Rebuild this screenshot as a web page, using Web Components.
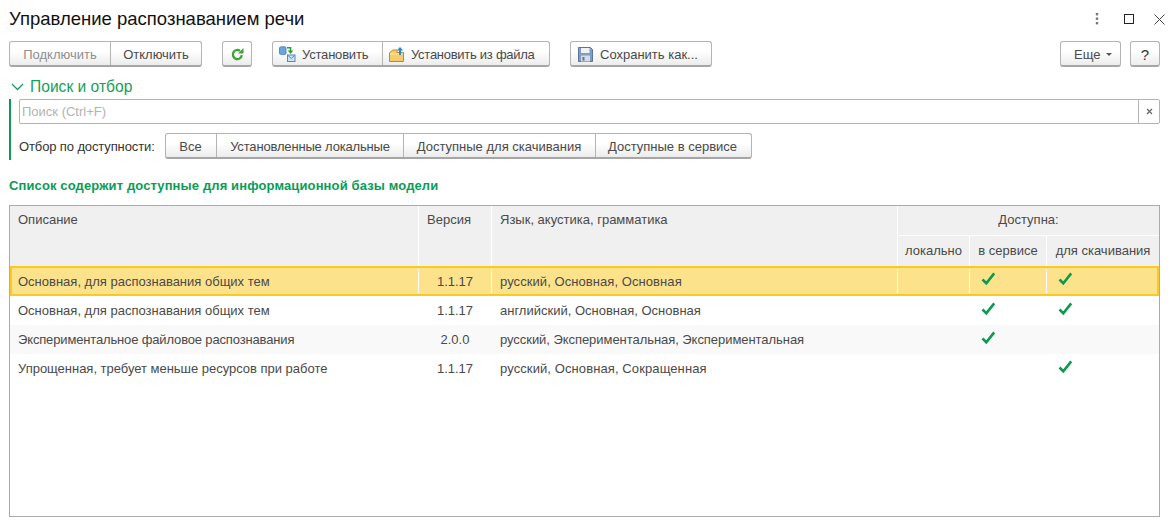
<!DOCTYPE html>
<html lang="ru"><head><meta charset="utf-8"><title>Управление распознаванием речи</title>
<style>
html,body{margin:0;padding:0;background:#fff}
body{font:13px "Liberation Sans",Arial,sans-serif;color:#333;width:1173px;height:526px;overflow:hidden}
</style></head><body>
<speech-form></speech-form>
<template id="t-group"><style>
:host{display:inline-flex;height:26px;box-sizing:border-box;border:1px solid #b4b4b4;border-bottom:2px solid #a6a6a6;border-radius:3px;background:linear-gradient(#fff,#fff 40%,#ececec);flex:none}
</style><slot></slot></template>
<template id="t-btn"><style>
:host{display:inline-flex;align-items:center;box-sizing:border-box;height:100%;padding-top:1px;font-size:13px;color:#4a4a4a;white-space:nowrap}
:host(:not(:first-child)){border-left:1px solid #b4b4b4}
:host([disabled]){color:#8f8f8f}
</style><slot></slot></template>
<template id="t-cell"><style>
:host{display:flex;align-items:center;box-sizing:border-box;padding:0 8px;font-size:13px;white-space:nowrap;color:#4a4a4a;min-width:0}
:host([center]){justify-content:center}
</style><slot></slot></template>
<template id="t-check"><style>
:host{display:inline-flex}
</style><svg width="15" height="14" viewBox="0 0 15 14"><path d="M1.500 7.500 5.300 11.200 13.200 1.400" fill="none" stroke="#0b9b4f" stroke-width="2.600"/></svg></template>

<template id="t-form"><style>
:host{display:flex;flex-direction:column;width:1173px;height:526px;box-sizing:border-box;padding:0 13px 9px 9px}
.head{display:flex;align-items:center;height:38px;flex:none}
h1{margin:0;font:400 18.500px "Liberation Sans",Arial,sans-serif;color:#111;flex:1}
.wctl{display:flex;align-items:center;gap:20px;margin-right:-5px}
.bar{display:flex;align-items:flex-start;height:26px;margin-top:3px;flex:none}
.gap20{width:20px;flex:none}
.sp{flex:1}
.sec{display:flex;align-items:center;gap:6px;height:20px;margin-top:10px;color:#14a05a;font-size:15.600px;padding-left:2px;flex:none}
.filter{border-left:2px solid #0c9b51;padding-left:8px;height:61px;box-sizing:border-box;margin-top:2px;flex:none}
.search{display:flex;height:25px;box-sizing:border-box;border:1px solid #b4b4b4;border-radius:2px;width:1141px}
.search .ph{flex:1;color:#b3b3b3;font-size:13px;line-height:23px;padding-left:2px}
.search .x{width:20px;border-left:1px solid #b4b4b4;display:flex;align-items:center;justify-content:center}
.frow{display:flex;align-items:center;margin-top:9px;height:26px}
.frow .lbl{width:146px;flex:none;font-size:13px;color:#333;letter-spacing:-.12px}
.note{margin-top:19px;height:14px;line-height:14px;font-weight:700;font-size:13px;color:#0b9b57;letter-spacing:.12px;flex:none}
</style>
<div class="head"><h1>Управление распознаванием речи</h1>
<div class="wctl">
<svg width="4" height="12" viewBox="0 0 4 12" style="margin-right:5px"><g fill="#777"><rect x=".8" y="0" width="2.400" height="2.400"/><rect x=".8" y="4.500" width="2.400" height="2.400"/><rect x=".8" y="9" width="2.400" height="2.400"/></g></svg>
<svg width="10" height="10" viewBox="0 0 10 10"><rect x=".5" y=".5" width="9" height="9" fill="none" stroke="#222"/></svg>
<svg width="11" height="11" viewBox="0 0 11 11"><path d="M.5.5 10.500 10.500M10.500.5.5 10.500" stroke="#444" fill="none"/></svg>
</div></div>
<div class="bar">
<ui-group><ui-btn disabled style="width:100px;justify-content:center">Подключить</ui-btn><ui-btn style="width:91px;justify-content:center">Отключить</ui-btn></ui-group>
<div class="gap20"></div>
<ui-group><ui-btn style="width:28px;justify-content:center"><svg width="13" height="13" viewBox="0 0 13 13"><path d="M10.800 7.200A4.500 4.500 0 1 1 9 2.900" fill="none" stroke="#3da335" stroke-width="2.300"/><path d="M7 5.500H12.500V0z" fill="#3da335"/></svg></ui-btn></ui-group>
<div class="gap20"></div>
<ui-group><ui-btn style="width:109px;padding-left:6px"><svg width="17" height="16" viewBox="0 0 17 16" style="margin-right:6px"><path d="M.5 1.800C.5 .3 7 .3 7 1.800V7.500C7 9 .5 9 .5 7.500z" fill="#6aa5dc" stroke="#3f78b5" stroke-width=".8"/><rect x="8.500" y="9" width="7.500" height="6.500" fill="#cfe3f5" stroke="#4f8ac4"/><path d="M8.800 9.300 12.250 12.500 15.700 9.300" fill="none" stroke="#4f8ac4"/><path d="M8 1.800H11.500V5" fill="none" stroke="#2da02d" stroke-width="1.600"/><path d="M8.700 4.500H14.300L11.500 8z" fill="#2da02d"/></svg><span style="letter-spacing:-.2px">Установить</span></ui-btn><ui-btn style="width:167px;padding-left:6px"><svg width="15" height="15" viewBox="0 0 15 15" style="margin-right:7px"><path d="M.5 14.500V6L3.500 3H8V5.500H14.500V14.500z" fill="#f7cd6b" stroke="#b58a2e"/><path d="M1 7H14" stroke="#fde9ae"/><path d="M10 8V3.500H7.800L11 0 14.200 3.500H12V8z" fill="#2e86cf"/></svg><span style="letter-spacing:-.27px">Установить из файла</span></ui-btn></ui-group>
<div class="gap20"></div>
<ui-group><ui-btn style="width:140px;padding-left:7px"><svg width="15" height="15" viewBox="0 0 15 15" style="margin-right:7px"><path d="M.5.5H12.500L14.500 2.500V14.500H.5z" fill="#7f9dc4" stroke="#5d7393"/><rect x="3" y="1" width="8.500" height="5" fill="#eef2f7"/><rect x="3" y="8.500" width="9" height="6" fill="#d5dce5"/><rect x="4.500" y="10" width="2" height="3.500" fill="#5d7393"/></svg>Сохранить как...</ui-btn></ui-group>
<div class="sp"></div>
<ui-group><ui-btn style="width:59px;padding-left:13px">Еще<svg width="6" height="3" viewBox="0 0 6 3" style="margin-left:6px"><path d="M0 0H6L3 3z" fill="#555"/></svg></ui-btn></ui-group>
<div style="width:9px;flex:none"></div>
<ui-group><ui-btn style="width:28px;justify-content:center;font-size:15px;color:#333">?</ui-btn></ui-group>
</div>
<div class="sec"><svg width="13" height="8" viewBox="0 0 13 8"><path d="M1 1 6.500 6.500 12 1" fill="none" stroke="#14a05a" stroke-width="1.300"/></svg><span>Поиск и отбор</span></div>
<div class="filter">
<div class="search"><div class="ph">Поиск (Ctrl+F)</div><div class="x"><svg width="7" height="7" viewBox="0 0 7 7"><path d="M1 1 6 6M6 1 1 6" stroke="#666" stroke-width="1.200"/></svg></div></div>
<div class="frow"><div class="lbl">Отбор по доступности:</div>
<ui-group><ui-btn style="width:50px;justify-content:center;padding-right:1px">Все</ui-btn><ui-btn style="width:187px;justify-content:center"><span style="letter-spacing:-.17px">Установленные локальные</span></ui-btn><ui-btn style="width:192px;justify-content:center;padding-right:1px">Доступные для скачивания</ui-btn><ui-btn style="width:156px;justify-content:center;padding-right:2px">Доступные в сервисе</ui-btn></ui-group>
</div></div>
<div class="note">Список содержит доступные для информационной базы модели</div>
<models-table style="margin-top:12px"></models-table>
</template>

<template id="t-table"><style>
:host{display:flex;flex-direction:column;flex:1;box-sizing:border-box;border:1px solid #ababab;min-height:0;width:1151px}
.hd,.row{display:grid;grid-template-columns:408px 1px 72px 1px 405px 1px 71px 1px 76px 1px 112px}
.hd{grid-template-rows:29px 1px 30px;background:#dcdcdc;height:60px;flex:none}
.hd ui-cell{background:#f0f0f0}
.top{align-items:flex-start;padding-top:6px}
.up{padding-bottom:2px}
.row{height:29px;flex:none}
.row.alt{background:#f9f9f9}
.row.sel{background:#fde28c;box-shadow:inset 0 0 0 2px #fbca22;height:30px}
.sep{background:transparent}
.row.sel .sep{background:#fff;margin:3px 0}
.hd .s{background:#fff}
.chk{padding-left:11px;padding-bottom:4px}
</style>
<div class="hd">
<ui-cell class="top" style="grid-row:1/4;grid-column:1">Описание</ui-cell><div class="s" style="grid-row:1/4;grid-column:2"></div>
<ui-cell class="top" style="grid-row:1/4;grid-column:3">Версия</ui-cell><div class="s" style="grid-row:1/4;grid-column:4"></div>
<ui-cell class="top" style="grid-row:1/4;grid-column:5">Язык, акустика, грамматика</ui-cell><div class="s" style="grid-row:1/4;grid-column:6"></div>
<ui-cell center class="up" style="grid-row:1;grid-column:7/12">Доступна:</ui-cell>
<div class="s" style="grid-row:2;grid-column:7/12"></div>
<ui-cell center class="up" style="grid-row:3;grid-column:7;padding-left:0;padding-right:0">локально</ui-cell><div class="s" style="grid-row:3;grid-column:8"></div>
<ui-cell center class="up" style="grid-row:3;grid-column:9;padding-left:0;padding-right:0">в сервисе</ui-cell><div class="s" style="grid-row:3;grid-column:10"></div>
<ui-cell center class="up" style="grid-row:3;grid-column:11;padding-left:0;padding-right:0">для скачивания</ui-cell>
</div>
<div id="rows"></div>
</template>

<script>
function shadow(el,id){const r=el.attachShadow({mode:'open'});r.appendChild(document.getElementById(id).content.cloneNode(true));return r}
class UiGroup extends HTMLElement{constructor(){super();shadow(this,'t-group')}}
class UiBtn extends HTMLElement{constructor(){super();shadow(this,'t-btn')}}
class UiCell extends HTMLElement{constructor(){super();shadow(this,'t-cell')}}
class UiCheck extends HTMLElement{constructor(){super();shadow(this,'t-check')}}
class ModelsTable extends HTMLElement{constructor(){super();const r=shadow(this,'t-table');
const data=[
['Основная, для распознавания общих тем','1.1.17','русский, Основная, Основная',0,1,1,0,.07],
['Основная, для распознавания общих тем','1.1.17','английский, Основная, Основная',0,1,1,0,0],
['Экспериментальное файловое распознавания','2.0.0','русский, Экспериментальная, Экспериментальная',0,1,0,-.15,-.05],
['Упрощенная, требует меньше ресурсов при работе','1.1.17','русский, Основная, Сокращенная',0,0,1,-.02,.1]];
const box=r.getElementById('rows');
data.forEach((d,i)=>{const row=document.createElement('div');row.className='row'+(i==0?' sel':'')+(i==2?' alt':'');
const chk=v=>v?'<ui-check></ui-check>':'';
row.innerHTML=`<ui-cell><span style="letter-spacing:${d[6]}px">${d[0]}</span></ui-cell><div class="sep"></div><ui-cell center>${d[1]}</ui-cell><div class="sep"></div><ui-cell><span style="letter-spacing:${d[7]}px">${d[2]}</span></ui-cell><div class="sep"></div><ui-cell></ui-cell><div class="sep"></div><ui-cell class="chk">${chk(d[4])}</ui-cell><div class="sep"></div><ui-cell class="chk">${chk(d[5])}</ui-cell>`;
box.appendChild(row)});
}}
class SpeechForm extends HTMLElement{constructor(){super();shadow(this,'t-form')}}
customElements.define('ui-group',UiGroup);customElements.define('ui-btn',UiBtn);customElements.define('ui-cell',UiCell);customElements.define('ui-check',UiCheck);customElements.define('models-table',ModelsTable);customElements.define('speech-form',SpeechForm);
</script>
</body></html>
